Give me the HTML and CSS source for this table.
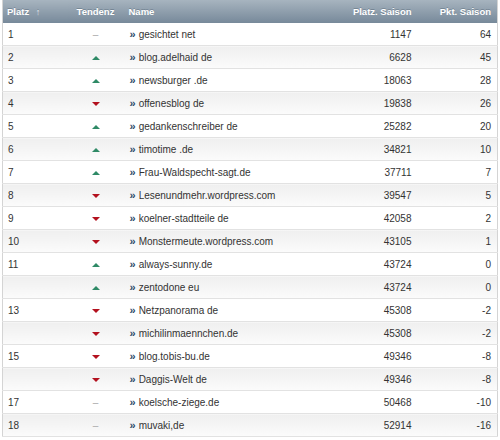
FILE: index.html
```html
<!DOCTYPE html>
<html>
<head>
<meta charset="utf-8">
<link rel="stylesheet" href="styles.css">
</head>
<body>
<table class="rank">
<colgroup><col class="c1"><col class="c2"><col class="c3"><col class="c4"><col class="c5"></colgroup>
<thead>
<tr><th class="pl">Platz <span class="sort">&#8593;</span></th><th class="tc">Tendenz</th><th>Name</th><th class="num">Platz. Saison</th><th class="num">Pkt. Saison</th></tr>
</thead>
<tbody>
<tr><td>1</td><td class="tc"><span class="same">–</span></td><td><span class="go">»</span>gesichtet net</td><td class="num">1147</td><td class="num">64</td></tr>
<tr><td>2</td><td class="tc"><span class="up"></span></td><td><span class="go">»</span>blog.adelhaid de</td><td class="num">6628</td><td class="num">45</td></tr>
<tr><td>3</td><td class="tc"><span class="up"></span></td><td><span class="go">»</span>newsburger .de</td><td class="num">18063</td><td class="num">28</td></tr>
<tr><td>4</td><td class="tc"><span class="down"></span></td><td><span class="go">»</span>offenesblog de</td><td class="num">19838</td><td class="num">26</td></tr>
<tr><td>5</td><td class="tc"><span class="up"></span></td><td><span class="go">»</span>gedankenschreiber de</td><td class="num">25282</td><td class="num">20</td></tr>
<tr><td>6</td><td class="tc"><span class="up"></span></td><td><span class="go">»</span>timotime .de</td><td class="num">34821</td><td class="num">10</td></tr>
<tr><td>7</td><td class="tc"><span class="up"></span></td><td><span class="go">»</span>Frau-Waldspecht-sagt.de</td><td class="num">37711</td><td class="num">7</td></tr>
<tr><td>8</td><td class="tc"><span class="down"></span></td><td><span class="go">»</span>Lesenundmehr.wordpress.com</td><td class="num">39547</td><td class="num">5</td></tr>
<tr><td>9</td><td class="tc"><span class="down"></span></td><td><span class="go">»</span>koelner-stadtteile de</td><td class="num">42058</td><td class="num">2</td></tr>
<tr><td>10</td><td class="tc"><span class="down"></span></td><td><span class="go">»</span>Monstermeute.wordpress.com</td><td class="num">43105</td><td class="num">1</td></tr>
<tr><td>11</td><td class="tc"><span class="up"></span></td><td><span class="go">»</span>always-sunny.de</td><td class="num">43724</td><td class="num">0</td></tr>
<tr><td></td><td class="tc"><span class="up"></span></td><td><span class="go">»</span>zentodone eu</td><td class="num">43724</td><td class="num">0</td></tr>
<tr><td>13</td><td class="tc"><span class="down"></span></td><td><span class="go">»</span>Netzpanorama de</td><td class="num">45308</td><td class="num">-2</td></tr>
<tr><td></td><td class="tc"><span class="down"></span></td><td><span class="go">»</span>michilinmaennchen.de</td><td class="num">45308</td><td class="num">-2</td></tr>
<tr><td>15</td><td class="tc"><span class="down"></span></td><td><span class="go">»</span>blog.tobis-bu.de</td><td class="num">49346</td><td class="num">-8</td></tr>
<tr><td></td><td class="tc"><span class="down"></span></td><td><span class="go">»</span>Daggis-Welt de</td><td class="num">49346</td><td class="num">-8</td></tr>
<tr><td>17</td><td class="tc"><span class="same">–</span></td><td><span class="go">»</span>koelsche-ziege.de</td><td class="num">50468</td><td class="num">-10</td></tr>
<tr><td>18</td><td class="tc"><span class="same">–</span></td><td><span class="go">»</span>muvaki,de</td><td class="num">52914</td><td class="num">-16</td></tr>
</tbody>
</table>
</body>
</html>
```
FILE: styles.css
```css
html, body { margin: 0; padding: 0; background: #fff; }
body { padding: 0 3px 0 2px; }
.rank {
  width: 495px;
  border-collapse: collapse;
  table-layout: fixed;
  font-family: "Liberation Sans", Arial, sans-serif;
  font-size: 10px;
  color: #333;
  border-left: 1px solid #d4d4d4;
  border-right: 1px solid #d4d4d4;
}
.c1 { width: 65px; }
.c2 { width: 56px; }
.c3 { width: 204px; }
.c4 { width: 90px; }
.c5 { width: 80px; }
.rank th {
  height: 23px;
  padding: 0 6px 0 5px;
  text-align: left;
  color: #fff;
  font-weight: bold;
  font-size: 9.5px;
  background: linear-gradient(#a7b4bf, #77899a);
  text-shadow: 0 -1px 0 rgba(60,80,95,0.35);
  white-space: nowrap;
}
.rank th.pl { padding-left: 4px; }
.sort { margin-left: 4px; font-size: 9px; color: #e8eef2; }
.rank td {
  height: 22px;
  padding: 0 6px 0 5px;
  border-bottom: 1px solid #e2e2e2;
  white-space: nowrap;
  vertical-align: middle;
}
.rank tbody tr:nth-child(even) td { background: linear-gradient(#efefef, #fbfbfb); }
.rank .tc { text-align: center; padding: 0; }
.rank .num { text-align: right; }
.go { color: #2c4a6a; font-weight: bold; font-size: 11px; margin-right: 3px; margin-left: 1px; }
.same { color: #aaa; }
.up, .down { display: inline-block; width: 0; height: 0; border-left: 4px solid transparent; border-right: 4px solid transparent; vertical-align: middle; }
.up { border-bottom: 4px solid #2f8a66; }
.down { border-top: 4px solid #b3111e; }
```
